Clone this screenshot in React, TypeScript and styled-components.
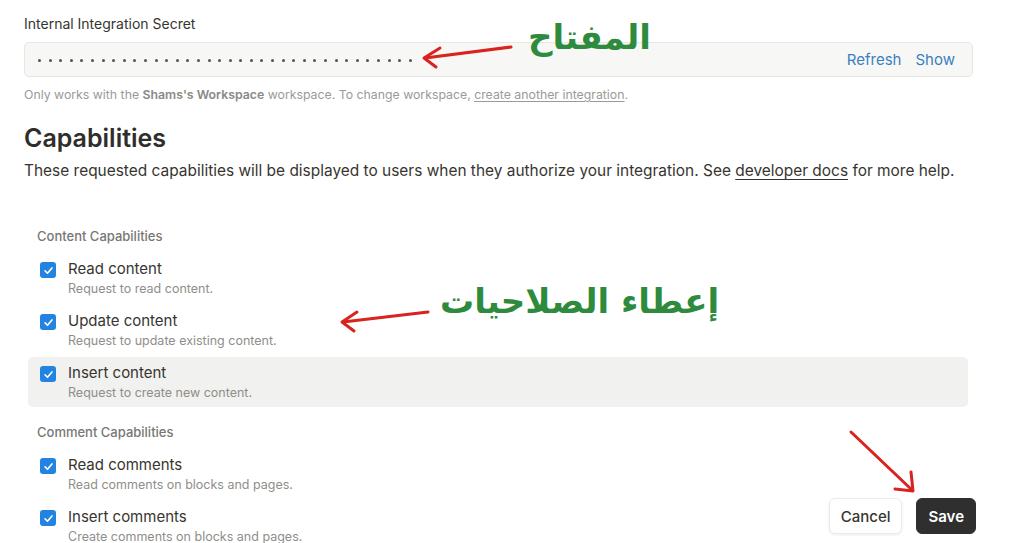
import React, { FC } from 'react'
import styled, { createGlobalStyle } from 'styled-components'

const GlobalStyle = createGlobalStyle`
	body {
		margin: 0;
		background: #ffffff;
		font-family: 'Inter', 'Liberation Sans', sans-serif;
		color: #37352f;
	}
`

const Page = styled.div`
	position: relative;
	width: 1024px;
	height: 543px;
	overflow: hidden;
	padding: 14px 51px 0 24px;
	box-sizing: border-box;
`

const FieldLabel = styled.div`
	font-size: 14px;
	line-height: 20px;
	color: #37352f;
`

const SecretBox = styled.div`
	display: flex;
	align-items: center;
	justify-content: space-between;
	height: 35px;
	margin-top: 8px;
	padding: 0 17px 0 13px;
	box-sizing: border-box;
	background: #f7f7f5;
	border: 1px solid #e6e6e3;
	border-radius: 5px;
`

const Dots = styled.div`
	display: flex;
	gap: 7.6px;
	margin-top: 2px;
`

const Dot = styled.span`
	width: 3px;
	height: 3px;
	border-radius: 50%;
	background: #55534e;
`

const Actions = styled.div`
	display: flex;
	gap: 14px;
`

const LinkButton = styled.span`
	font-size: 15px;
	color: #3b7fc1;
`

const Helper = styled.div`
	margin-top: 9px;
	font-size: 12.3px;
	line-height: 18px;
	color: #9b9a97;

	b {
		font-weight: 600;
		color: #8a8985;
	}
	u {
		text-underline-offset: 2px;
	}
`

const Heading = styled.h2`
	margin: 18px 0 0;
	font-size: 25px;
	line-height: 32px;
	font-weight: 600;
	color: #2f2e2a;
`

const Lead = styled.p`
	margin: 5px 0 0;
	font-size: 15.45px;
	line-height: 24px;
	color: #37352f;
	white-space: nowrap;

	u {
		text-underline-offset: 3px;
	}
`

const Groups = styled.div`
	margin: 44px 5px 0 4px;
`

const GroupTitle = styled.div<{ first?: boolean }>`
	margin: ${p => (p.first ? '0' : '16px')} 0 8px 9px;
	font-size: 13px;
	line-height: 18px;
	font-weight: 500;
	color: #787774;
`

const List = styled.div`
	display: flex;
	flex-direction: column;
	gap: 2px;
`

const Row = styled.div<{ active?: boolean }>`
	display: flex;
	gap: 12px;
	padding: 6px 12px;
	border-radius: 5px;
	background: ${p => (p.active ? '#f1f1ef' : 'transparent')};
`

const Box = styled.span`
	flex: none;
	display: flex;
	align-items: center;
	justify-content: center;
	width: 16px;
	height: 16px;
	margin-top: 3px;
	border-radius: 3px;
	background: #2383e2;
`

const Title = styled.div`
	font-size: 15px;
	line-height: 20px;
	color: #37352f;
`

const Sub = styled.div`
	margin-top: 2px;
	font-size: 12.5px;
	line-height: 16px;
	color: #8f8e8a;
`

const Footer = styled.div`
	position: absolute;
	right: 48px;
	top: 498px;
	display: flex;
	gap: 14px;
`

const Button = styled.button<{ dark?: boolean }>`
	height: 36px;
	padding: 0 11px;
	border-radius: 6px;
	font-family: 'Inter', 'Liberation Sans', sans-serif;
	font-size: 15px;
	font-weight: ${p => (p.dark ? 600 : 500)};
	color: ${p => (p.dark ? '#ffffff' : '#37352f')};
	background: ${p => (p.dark ? '#2f2f2f' : '#ffffff')};
	border: 1px solid ${p => (p.dark ? '#2f2f2f' : '#ebebea')};
	box-shadow: ${p => (p.dark ? 'none' : '0 1px 3px rgba(15, 15, 15, 0.08)')};
`

const Note = styled.div<{ x: number; y: number }>`
	position: absolute;
	left: ${p => p.x}px;
	top: ${p => p.y}px;
	direction: rtl;
	font-family: 'DejaVu Sans', sans-serif;
	font-weight: 700;
	font-size: 34px;
	line-height: 1;
	color: #2e8b3e;
	white-space: nowrap;
`

const Arrows = styled.svg`
	position: absolute;
	left: 0;
	top: 0;
	pointer-events: none;
`

const Check: FC = () => (
	<svg width='11' height='11' viewBox='0 0 12 12'>
		<path d='M2.2 6.3 L4.9 9 L9.8 3.2' fill='none' stroke='#fff' strokeWidth='1.8' strokeLinecap='round' strokeLinejoin='round' />
	</svg>
)

interface Capability {
	title: string
	desc: string
	active?: boolean
}

const contentCaps: Capability[] = [
	{ title: 'Read content', desc: 'Request to read content.' },
	{ title: 'Update content', desc: 'Request to update existing content.' },
	{ title: 'Insert content', desc: 'Request to create new content.', active: true },
]

const commentCaps: Capability[] = [
	{ title: 'Read comments', desc: 'Read comments on blocks and pages.' },
	{ title: 'Insert comments', desc: 'Create comments on blocks and pages.' },
]

const CapList: FC<{ items: Capability[] }> = ({ items }) => (
	<List>
		{items.map(c => (
			<Row key={c.title} active={c.active}>
				<Box>
					<Check />
				</Box>
				<div>
					<Title>{c.title}</Title>
					<Sub>{c.desc}</Sub>
				</div>
			</Row>
		))}
	</List>
)

const Arrow: FC<{ d: string; head: string }> = ({ d, head }) => (
	<g fill='none' stroke='#d8231f' strokeWidth='3' strokeLinecap='round' strokeLinejoin='round'>
		<path d={d} />
		<path d={head} />
	</g>
)

const App: FC = () => (
	<>
		<GlobalStyle />
		<Page>
			<FieldLabel>Internal Integration Secret</FieldLabel>
			<SecretBox>
				<Dots>
					{Array.from({ length: 36 }).map((_, i) => (
						<Dot key={i} />
					))}
				</Dots>
				<Actions>
					<LinkButton>Refresh</LinkButton>
					<LinkButton>Show</LinkButton>
				</Actions>
			</SecretBox>
			<Helper>
				Only works with the <b>Shams's Workspace</b> workspace. To change workspace, <u>create another integration</u>.
			</Helper>

			<Heading>Capabilities</Heading>
			<Lead>
				These requested capabilities will be displayed to users when they authorize your integration. See{' '}
				<u>developer docs</u> for more help.
			</Lead>

			<Groups>
				<GroupTitle first>Content Capabilities</GroupTitle>
				<CapList items={contentCaps} />
				<GroupTitle>Comment Capabilities</GroupTitle>
				<CapList items={commentCaps} />
			</Groups>

			<Footer>
				<Button>Cancel</Button>
				<Button dark>Save</Button>
			</Footer>

			<Note x={528} y={20}>المفتاح</Note>
			<Note x={440} y={284}>إعطاء الصلاحيات</Note>

			<Arrows width='1024' height='543' viewBox='0 0 1024 543'>
				<Arrow d='M511 47 L425 58' head='M440 48 L424 58 L436 67' />
				<Arrow d='M428 312 L343 322' head='M357 312 L342 322 L354 331' />
				<Arrow d='M851 432 L912 490' head='M911 472 L913 491 L895 489' />
			</Arrows>
		</Page>
	</>
)

export default App
